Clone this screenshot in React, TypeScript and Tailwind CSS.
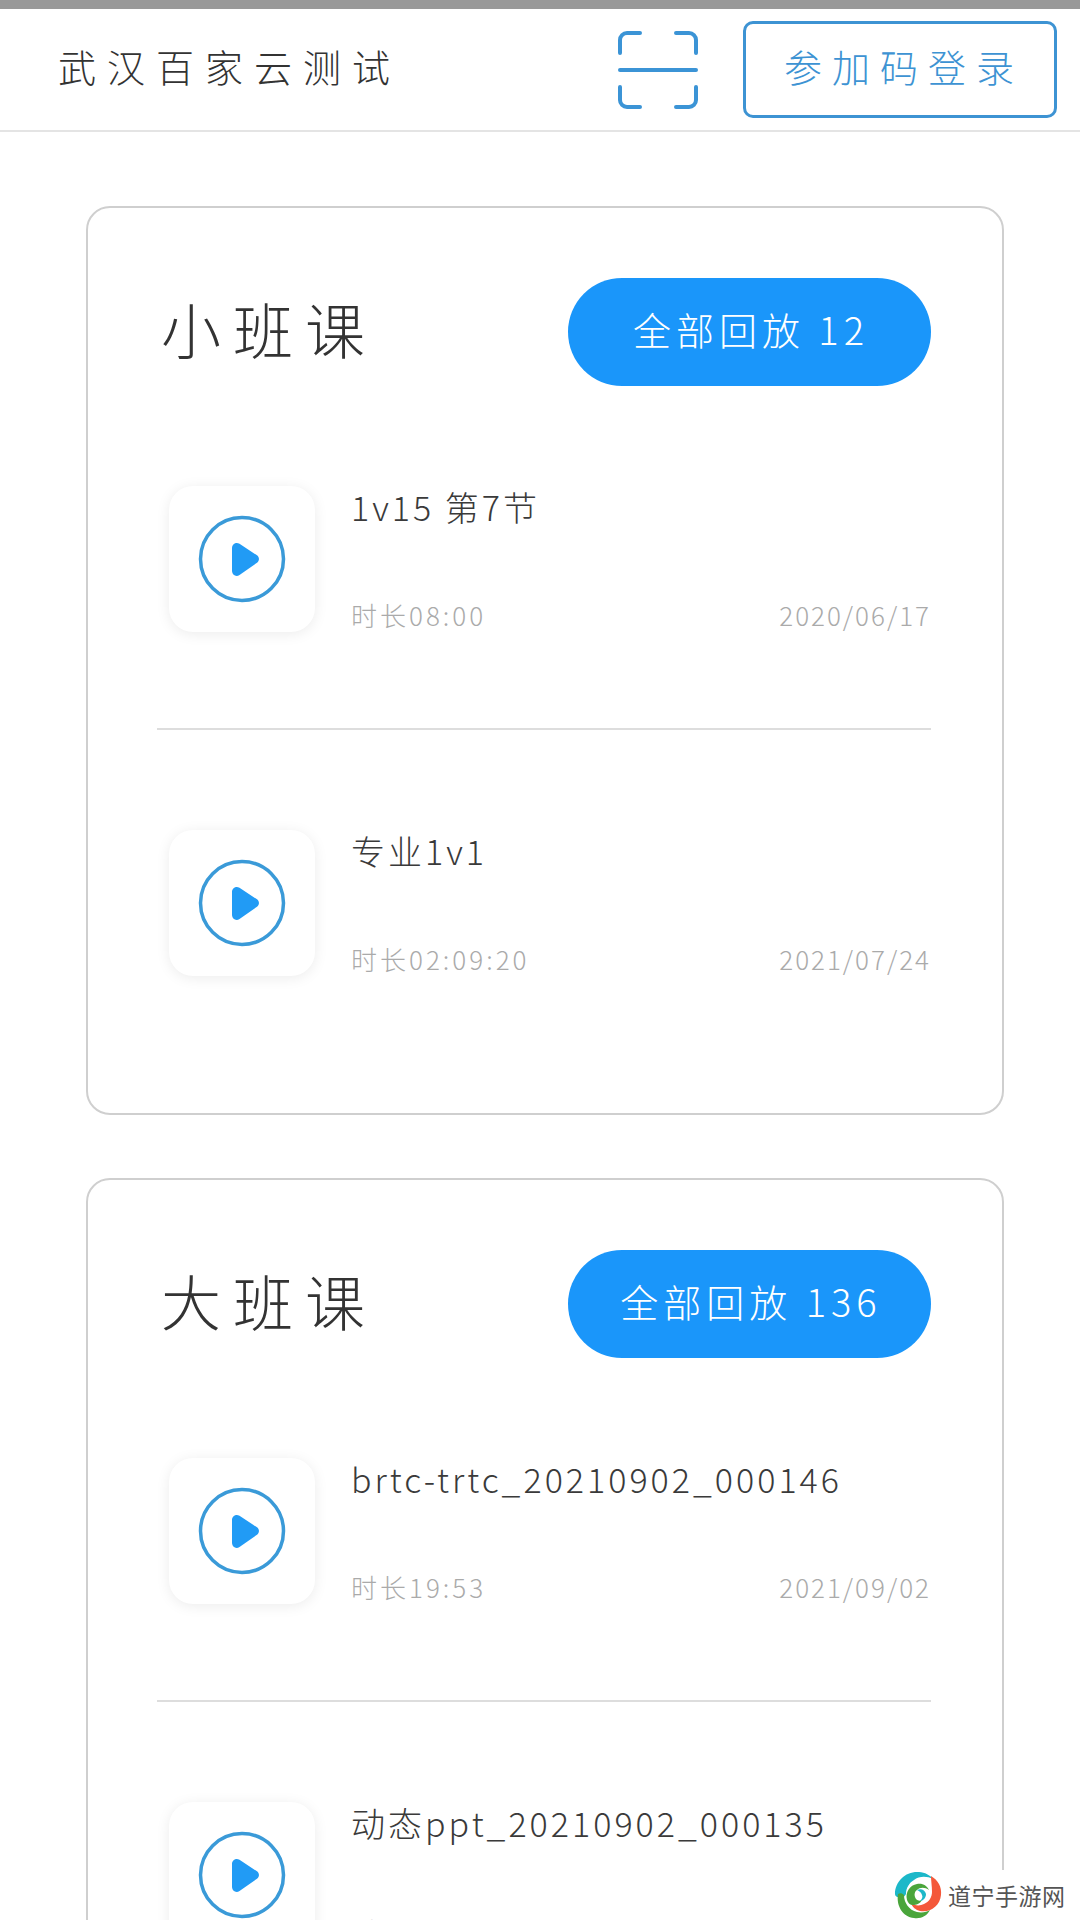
const font = "font-['Noto_Sans_CJK_SC','Noto_Sans',sans-serif]";

function ScanIcon() {
  return (
    <svg width="82" height="80" viewBox="0 0 82 80" fill="none" stroke="#3b94d6" strokeWidth="4" strokeLinecap="round" strokeLinejoin="round">
      <path d="M3 23V10a7 7 0 0 1 7-7h13" />
      <path d="M59 3h13a7 7 0 0 1 7 7v13" />
      <path d="M3 40h76" />
      <path d="M3 57v13a7 7 0 0 0 7 7h13" />
      <path d="M59 77h13a7 7 0 0 0 7-7V57" />
    </svg>
  );
}

function PlayTile() {
  return (
    <div className="w-[146px] h-[146px] shrink-0 ml-3 rounded-[24px] bg-white shadow-[0_2px_14px_rgba(0,0,0,0.08)] flex items-center justify-center">
      <svg width="88" height="88" viewBox="0 0 88 88" fill="none">
        <circle cx="44" cy="44" r="41.5" stroke="#3a9ad8" strokeWidth="3.5" />
        <path d="M34 33c0-4 4-6.500 7.500-4.200l17.500 11.500c2.600 2 2.600 5.500 0 7.400L41.500 60c-3.500 2.300-7.500-.2-7.500-4.200z" fill="#219bf5" />
      </svg>
    </div>
  );
}

function Row({ title, time, date }: { title: string; time: string; date: string }) {
  return (
    <div className="flex items-start">
      <PlayTile />
      <div className="ml-[36px] flex-1 h-[146px] flex flex-col justify-between">
        <div className="-mt-[3px] text-[34px] leading-[48px] font-light tracking-[3px] text-[#3a3a3a] whitespace-nowrap">{title}</div>
        <div className="flex justify-between text-[26px] leading-[34px] font-light text-[#aaaaaa]">
          <span className="tracking-[3px]">{time}</span>
          <span className="tracking-[2px]">{date}</span>
        </div>
      </div>
    </div>
  );
}

function Card({ title, count, rows }: { title: string; count: string; rows: { title: string; time: string; date: string }[] }) {
  return (
    <section className="ml-[86px] w-[918px] h-[909px] rounded-[24px] border-2 border-[#cfcfcf] bg-white pl-[69px] pr-[71px] pt-[70px]">
      <div className="flex items-center justify-between">
        <h2 className="ml-1 pb-[8px] text-[60px] leading-[100px] font-light tracking-[12px] text-[#333333]">{title}</h2>
        <div className="w-[363px] h-[108px] pb-[7px] pl-[3px] rounded-full bg-[#1a96fa] flex items-center justify-center text-[38px] font-light tracking-[5px] text-white">
          全部回放 {count}
        </div>
      </div>
      <div className="mt-[100px]">
        <Row {...rows[0]} />
      </div>
      <div className="mt-[96px] mb-[100px] h-[2px] bg-[#dddddd]" />
      <Row {...rows[1]} />
    </section>
  );
}

export default function App() {
  return (
    <div className={`relative w-[1080px] h-[1920px] overflow-hidden bg-white ${font}`}>
      <div className="h-[9px] bg-[#999999]" />
      <header className="h-[123px] border-b-2 border-[#e4e4e4] flex items-center pl-[58px] pr-[23px]">
        <div className="pb-[8px] text-[38px] font-light tracking-[11px] text-[#333333] whitespace-nowrap">武汉百家云测试</div>
        <div className="ml-auto"><ScanIcon /></div>
        <div className="ml-[44px] w-[314px] h-[97px] pb-[8px] pl-[8px] rounded-[10px] border-[3px] border-[#3d93d3] flex items-center justify-center text-[38px] font-light tracking-[10px] text-[#3d93d3]">
          参加码登录
        </div>
      </header>
      <main className="pt-[74px] flex flex-col gap-[63px]">
        <Card
          title="小班课"
          count="12"
          rows={[
            { title: "1v15 第7节", time: "时长08:00", date: "2020/06/17" },
            { title: "专业1v1", time: "时长02:09:20", date: "2021/07/24" },
          ]}
        />
        <Card
          title="大班课"
          count="136"
          rows={[
            { title: "brtc-trtc_20210902_000146", time: "时长19:53", date: "2021/09/02" },
            { title: "动态ppt_20210902_000135", time: "时长19:53", date: "2021/09/02" },
          ]}
        />
      </main>
      <div className="absolute right-0 bottom-0 w-[190px] h-[50px] bg-white flex items-center pl-[3px]">
        <svg width="50" height="50" viewBox="0 0 50 50" fill="none">
          <path d="M2 24C2 11 13 1 26 2c6 .4 11 3 14 7-6-3-14-3-19 1-5 3-8 8-8 14-1 2-2 3-5 3-4 1-6-1-6-3z" fill="#1cb8c9" />
          <path d="M38 6c7 4 11 11 10 19-1 11-11 18-21 16-4-1-8-4-9-8 4 3 9 3 13 1 5-2 8-7 8-12 0-6-1-11-1-16z" fill="#f4583a" />
          <path d="M5 24c2-1 4-1 6 1 0 8 5 15 13 17 5 1 10 0 13-2-3 6-9 9-16 8C10 47 3 36 5 24z" fill="#4aa53b" />
          <path d="M14 30c-2-8 3-15 10-16 6-1 10 2 12 6-4-3-9-3-12 0-3 2-3 6-1 9 2 2 4 2 6 1-2 4-6 5-9 5-3 0-5-2-6-5z" fill="#4aa53b" />
          <path d="M24 20c4-2 8 0 9 4 0 4-3 7-6 7 2-2 3-4 2-6-1-3-3-4-5-5z" fill="#1cb8c9" />
        </svg>
        <span className="ml-[5px] text-[23px] text-[#555555] whitespace-nowrap tracking-[0.5px]">道宁手游网</span>
      </div>
    </div>
  );
}
